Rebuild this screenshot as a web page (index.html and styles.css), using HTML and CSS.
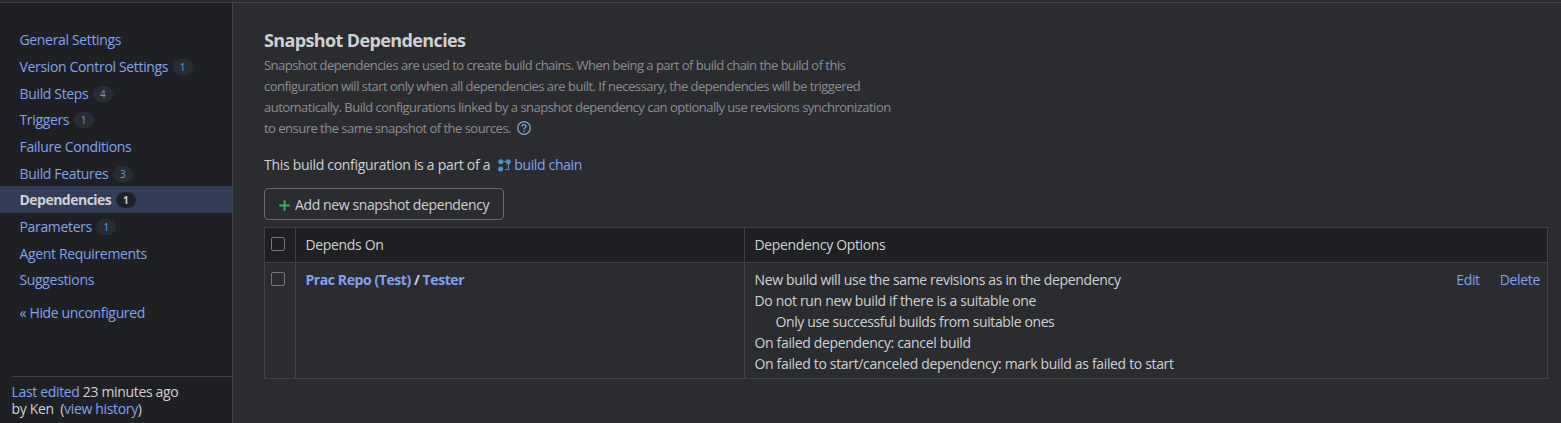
FILE: index.html
```html
<!DOCTYPE html>
<html lang="en">
<head>
<meta charset="utf-8">
<title>Snapshot Dependencies</title>
<link rel="stylesheet" href="styles.css">
</head>
<body>
<div class="layout">
  <aside class="sidebar">
    <nav class="menu">
      <a class="item"><span>General Settings</span></a>
      <a class="item"><span>Version Control Settings</span><span class="badge">1</span></a>
      <a class="item"><span>Build Steps</span><span class="badge">4</span></a>
      <a class="item"><span>Triggers</span><span class="badge">1</span></a>
      <a class="item"><span>Failure Conditions</span></a>
      <a class="item"><span>Build Features</span><span class="badge">3</span></a>
      <a class="item active"><span>Dependencies</span><span class="badge">1</span></a>
      <a class="item"><span>Parameters</span><span class="badge">1</span></a>
      <a class="item"><span>Agent Requirements</span></a>
      <a class="item"><span>Suggestions</span></a>
      <a class="item toggle"><span>« Hide unconfigured</span></a>
    </nav>
    <div class="edited">
      <div><a>Last edited</a> 23 minutes ago</div>
      <div>by Ken&nbsp; (<a>view history</a>)</div>
    </div>
  </aside>
  <main class="content">
    <h2>Snapshot Dependencies</h2>
    <p class="note">
      Snapshot dependencies are used to create build chains. When being a part of build chain the build of this<br>
      configuration will start only when all dependencies are built. If necessary, the dependencies will be triggered<br>
      automatically. Build configurations linked by a snapshot dependency can optionally use revisions synchronization<br>
      to ensure the same snapshot of the sources.
      <svg class="help" width="14" height="14" viewBox="0 0 14 14" fill="none" stroke="#7da9cc" stroke-width="1.3"><circle cx="7" cy="7" r="6.3"/><path d="M5 5.5C5 4.3 5.8 3.7 7 3.7s2 .7 2 1.7c0 1.3-1.9 1.4-1.9 2.9M7.1 9.3v1.4"/></svg>
    </p>
    <p class="chain"><span>This build configuration is a part of a</span>
      <svg width="13" height="13" viewBox="0 0 13 13"><path d="M2.5 2.5h8v8H7" fill="none" stroke="#4b93c1" stroke-width="1.2"/><g fill="#4b93c1"><circle cx="2.7" cy="2.7" r="2.5"/><circle cx="10.3" cy="2.7" r="2.5"/><circle cx="2.7" cy="10" r="2.5"/></g></svg><a>build chain</a></p>
    <button class="add"><svg width="11" height="11" viewBox="0 0 11 11"><path d="M5.5.3v10.4M.3 5.5h10.4" stroke="#38b55b" stroke-width="1.9"/></svg><span>Add new snapshot dependency</span></button>
    <div class="table">
      <div class="cell head check"><i></i></div>
      <div class="cell head">Depends On</div>
      <div class="cell head">Dependency Options</div>
      <div class="cell check"><i></i></div>
      <div class="cell repo"><a>Prac Repo (Test)</a> / <a>Tester</a></div>
      <div class="cell options">
        <div>
          <div>New build will use the same revisions as in the dependency</div>
          <div>Do not run new build if there is a suitable one</div>
          <div class="nested">Only use successful builds from suitable ones</div>
          <div>On failed dependency: cancel build</div>
          <div>On failed to start/canceled dependency: mark build as failed to start</div>
        </div>
        <div class="actions"><a>Edit</a><a>Delete</a></div>
      </div>
    </div>
  </main>
</div>
</body>
</html>
```
FILE: styles.css
```css
* { box-sizing: border-box; }
body {
  margin: 0;
  height: 423px;
  overflow: hidden;
  background: #2b2c30;
  color: #cfd0d4;
  font: 14px/21px "Open Sans", "Noto Sans", sans-serif;
  letter-spacing: -0.34px;
  padding-top: 2px;
}
a { color: #7fa3ec; text-decoration: none; }
h2, p { margin: 0; }
.layout { display: flex; height: 421px; border-top: 1px solid #414246; }
.sidebar {
  width: 233px;
  flex: none;
  background: #1f2023;
  border-right: 1px solid #414246;
  display: flex;
  flex-direction: column;
  justify-content: space-between;
}
.menu { padding-top: 23.5px; }
.item { display: flex; align-items: center; height: 26.66px; padding-left: 19.5px; gap: 4.5px; white-space: nowrap; }
.toggle { margin-top: 6.5px; }
.active { background: #333d55; color: #cfd0d4; font-weight: 700; letter-spacing: -0.52px; }
.badge {
  width: 20px;
  height: 16px;
  border: 1px solid #1d3148;
  border-radius: 8px;
  background: #2b2c30;
  color: #5b9cf0;
  font-size: 10px;
  line-height: 14px;
  text-align: center;
  letter-spacing: 0;
}
.item .badge { margin-top: 1px; }
.active .badge { background: #1f2023; border-color: #1f2838; color: #cfd0d4; }
.edited { margin-left: 12px; border-top: 1px solid #414246; padding-top: 6px; height: 47px; line-height: 17px; }
.edited div { margin-left: -0.5px; }
.content { flex: 1; padding: 25px 13px 0 31px; }
h2 { font-size: 18px; line-height: 24px; font-weight: 700; letter-spacing: -0.62px; }
.note { color: #8b8c90; font-size: 13px; letter-spacing: -0.52px; margin-top: 3px; white-space: nowrap; }
.help { margin-left: 3px; vertical-align: -2px; }
.chain { display: flex; align-items: center; margin-top: 15px; }
.chain span { letter-spacing: -0.3px; }
.chain svg { margin: 1px 3px 0 8px; }
.add {
  display: flex;
  align-items: center;
  width: 240px;
  height: 32px;
  margin: 13px 0 7px;
  padding: 0 0 0 14px;
  gap: 5px;
  border: 1px solid #66676b;
  border-radius: 4px;
  background: none;
  color: inherit;
  font: inherit;
  letter-spacing: -0.39px;
  white-space: nowrap;
}
.add svg { margin-top: 2px; }
.table {
  display: grid;
  grid-template-columns: 32px 449px 1fr;
  grid-template-rows: 35px 116px;
  border-top: 1px solid #414246;
}
.cell { border: solid #414246; border-width: 0 1px 1px 0; padding: 6px 10px 0 9.5px; }
.check { border-left-width: 1px; padding: 9px 6px; }
.check i { display: block; width: 14px; height: 14px; border: 1px solid #77787c; border-radius: 2px; }
.head { background: #1f2023; }
.repo { font-weight: 700; letter-spacing: -0.42px; }
.options { display: flex; justify-content: space-between; white-space: nowrap; }
.nested { padding-left: 21px; letter-spacing: -0.38px; }
.actions { display: flex; gap: 20px; margin-right: -3px; }
```
